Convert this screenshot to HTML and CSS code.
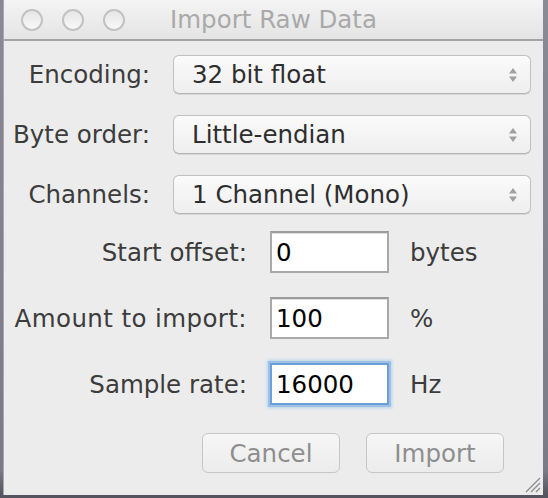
FILE: index.html
```html
<!DOCTYPE html>
<html>
<head>
<meta charset="utf-8">
<link rel="stylesheet" href="styles.css">
</head>
<body>
<div class="window">
  <div class="titlebar">
    <div class="lights">
      <span class="light"></span><span class="light"></span><span class="light"></span>
    </div>
    <div class="title">Import Raw Data</div>
  </div>
  <div class="content">
    <div class="popups">
      <label class="plabel">Encoding:</label>
      <div class="popup"><span>32 bit float</span>
        <svg class="stepper" width="12" height="22" viewBox="0 0 12 22"><path d="M6 4 L10 9.5 L2 9.5 Z" fill="#a0a0a0"/><path d="M6 18 L10 12.5 L2 12.5 Z" fill="#a0a0a0"/></svg>
      </div>
      <label class="plabel">Byte order:</label>
      <div class="popup"><span>Little-endian</span>
        <svg class="stepper" width="12" height="22" viewBox="0 0 12 22"><path d="M6 4 L10 9.5 L2 9.5 Z" fill="#a0a0a0"/><path d="M6 18 L10 12.5 L2 12.5 Z" fill="#a0a0a0"/></svg>
      </div>
      <label class="plabel">Channels:</label>
      <div class="popup"><span>1 Channel (Mono)</span>
        <svg class="stepper" width="12" height="22" viewBox="0 0 12 22"><path d="M6 4 L10 9.5 L2 9.5 Z" fill="#a0a0a0"/><path d="M6 18 L10 12.5 L2 12.5 Z" fill="#a0a0a0"/></svg>
      </div>
    </div>
    <div class="fields">
      <label class="flabel">Start offset:</label>
      <div class="field">0</div>
      <span class="unit">bytes</span>
      <label class="flabel wide">Amount to import:</label>
      <div class="field">100</div>
      <span class="unit">%</span>
      <label class="flabel">Sample rate:</label>
      <div class="field focused">16000</div>
      <span class="unit">Hz</span>
    </div>
    <div class="buttons">
      <div class="btn">Cancel</div>
      <div class="btn">Import</div>
    </div>
    <svg class="grip" width="18" height="18" viewBox="0 0 18 18">
      <path d="M17 3 L3 17 M17 8 L8 17 M17 13 L13 17" stroke="#8a8a8a" stroke-width="1.2"/>
    </svg>
  </div>
</div>
</body>
</html>
```
FILE: styles.css
```css
* { box-sizing: border-box; }
html, body { margin: 0; padding: 0; }
body {
  width: 548px;
  height: 498px;
  background: linear-gradient(to bottom, #8a8a96 0, #7a7a88 470px, #55555f 495px);
  font-family: "DejaVu Sans", "Noto Sans", sans-serif;
  font-size: 24.5px;
  color: #3c3c3c;
  overflow: hidden;
}
.window {
  margin-left: 3px;
  width: 540px;
  height: 495px;
  background: #ececec;
  border-left: 1px solid #a8a8a8;
  position: relative;
}
.titlebar {
  height: 41px;
  background: linear-gradient(to bottom, #f4f4f4, #e4e4e4);
  border-bottom: 2px solid #a4a4a4;
  display: flex;
  align-items: center;
  position: relative;
}
.lights {
  display: flex;
  gap: 19px;
  padding-left: 17px;
}
.light {
  width: 22px;
  height: 22px;
  border-radius: 50%;
  border: 2px solid #c2c2c2;
  background: linear-gradient(to bottom, #e6e6e6, #f8f8f8);
}
.title {
  position: absolute;
  left: 0;
  right: 0;
  top: 6px;
  text-align: center;
  color: #a9a9a9;
  font-size: 24.5px;
  line-height: 28px;
}
.content {
  padding-top: 14px;
}
.popups {
  display: grid;
  grid-template-columns: 146px 358px;
  column-gap: 23px;
  row-gap: 21px;
  align-items: center;
}
.plabel {
  text-align: right;
  white-space: nowrap;
}
.popup {
  height: 39px;
  border: 1px solid #c0c0c0;
  border-bottom-color: #b4b4b4;
  border-radius: 6px;
  background: linear-gradient(to bottom, #fbfbfb, #eeeeee);
  display: flex;
  align-items: center;
  justify-content: space-between;
  padding: 0 11px 0 18px;
  color: #2e2e2e;
  box-shadow: 0 1px 0 #d8d8d8;
}
.stepper { display: block; }
.fields {
  margin-top: 17px;
  display: grid;
  grid-template-columns: 243px 119px auto;
  column-gap: 23px;
  row-gap: 24px;
  align-items: center;
}
.flabel {
  text-align: right;
  white-space: nowrap;
}
.flabel.wide {
  letter-spacing: 0.4px;
}
.field {
  height: 42px;
  background: #ffffff;
  border: 2px solid #a9a9a9;
  border-top-color: #9c9c9c;
  box-shadow: inset 0 1px 0 #e0e0e0;
  padding-left: 4px;
  color: #000;
  display: flex;
  align-items: center;
}
.field.focused {
  border-color: #6d9fd6;
  box-shadow: 0 0 0 2px #9cc0e8, 0 0 3px 3px #b9d2ee;
}
.unit {
  color: #3c3c3c;
  margin-left: -2px;
}
.buttons {
  margin-top: 28px;
  display: flex;
  justify-content: flex-end;
  gap: 26px;
  padding-right: 39px;
}
.btn {
  width: 138px;
  height: 40px;
  border: 1px solid #c6c6c6;
  border-radius: 6px;
  background: linear-gradient(to bottom, #f6f6f6, #ececec);
  color: #8e8e8e;
  display: flex;
  align-items: center;
  justify-content: center;
}
.grip {
  position: absolute;
  right: 2px;
  bottom: 2px;
}
```
